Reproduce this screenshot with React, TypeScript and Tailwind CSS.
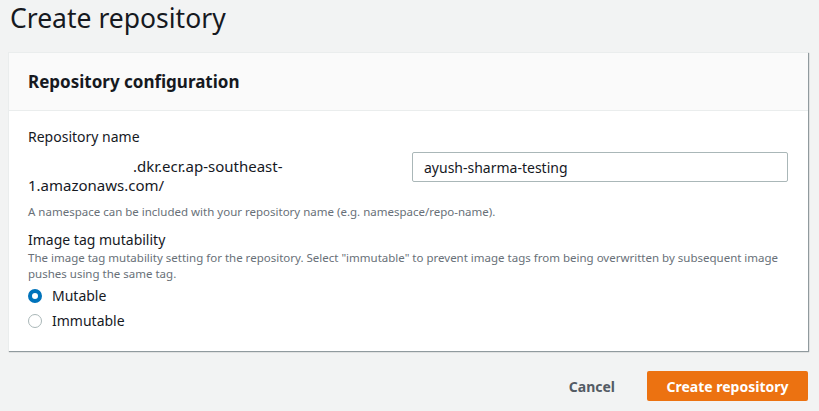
export default function App() {
  return (
    <main className="min-h-[411px] w-[819px] bg-[#f2f3f3] text-[#16191f] font-['Noto_Sans',sans-serif]">
      <h1 className="pl-[10px] pt-[1px] text-[26.5px] leading-[34px] font-normal">Create repository</h1>

      <section className="mt-[17px] ml-[8px] w-[800px] bg-white shadow-[1px_1px_1px_0_rgba(0,28,36,0.3),1px_1px_1px_0_rgba(0,28,36,0.15)] border-t border-l border-[#eaeded]">
        <div className="h-[58px] bg-[#fafafa] border-b border-[#eaeded] flex items-center pl-[19px] pr-[20px]">
          <h2 className="text-[17px] font-bold leading-[22px]">Repository configuration</h2>
        </div>

        <div className="pl-[19px] pr-[20px] pt-[16px] pb-[20px]">
          <label className="block text-[14px] leading-[20px]">Repository name</label>
          <div className="grid grid-cols-2 gap-[8px] mt-[5px]">
            <p className="text-[15px] leading-[19px] pt-[5px]">
              <span className="inline-block w-[105px]" />
              .dkr.ecr.ap-southeast-
              <br />
              1.amazonaws.com/
            </p>
            <div>
              <input
                readOnly
                value="ayush-sharma-testing"
                className="w-full h-[30px] border border-[#aab7b8] rounded-[2px] px-[11px] text-[14px] text-[#16191f] outline-none bg-white"
              />
            </div>
          </div>
          <p className="mt-[9px] text-[11.5px] leading-[16px] text-[#687078]">
            A namespace can be included with your repository name (e.g. namespace/repo-name).
          </p>

          <label className="block mt-[10px] text-[14px] leading-[20px]">Image tag mutability</label>
          <p className="text-[11.5px] leading-[16px] text-[#687078]">
            The image tag mutability setting for the repository. Select "immutable" to prevent image tags from being overwritten by subsequent image pushes using the same tag.
          </p>

          <div className="mt-[4px] flex flex-col gap-[5px]">
            <div className="flex items-center gap-[10px] h-[20px]">
              <span className="w-[14px] h-[14px] rounded-full border-[4px] border-[#0073bb] bg-white" />
              <span className="text-[14px] leading-[20px]">Mutable</span>
            </div>
            <div className="flex items-center gap-[10px] h-[20px]">
              <span className="w-[14px] h-[14px] rounded-full border border-[#aab7b8] bg-white" />
              <span className="text-[14px] leading-[20px]">Immutable</span>
            </div>
          </div>
        </div>
      </section>

      <div className="w-[808px] flex justify-end items-center gap-[32px] mt-[20px]">
        <button className="text-[14px] font-bold text-[#545b64]">Cancel</button>
        <button className="w-[161px] h-[30px] rounded-[2px] bg-[#ec7211] text-white text-[14px] font-bold">
          Create repository
        </button>
      </div>
    </main>
  )
}
